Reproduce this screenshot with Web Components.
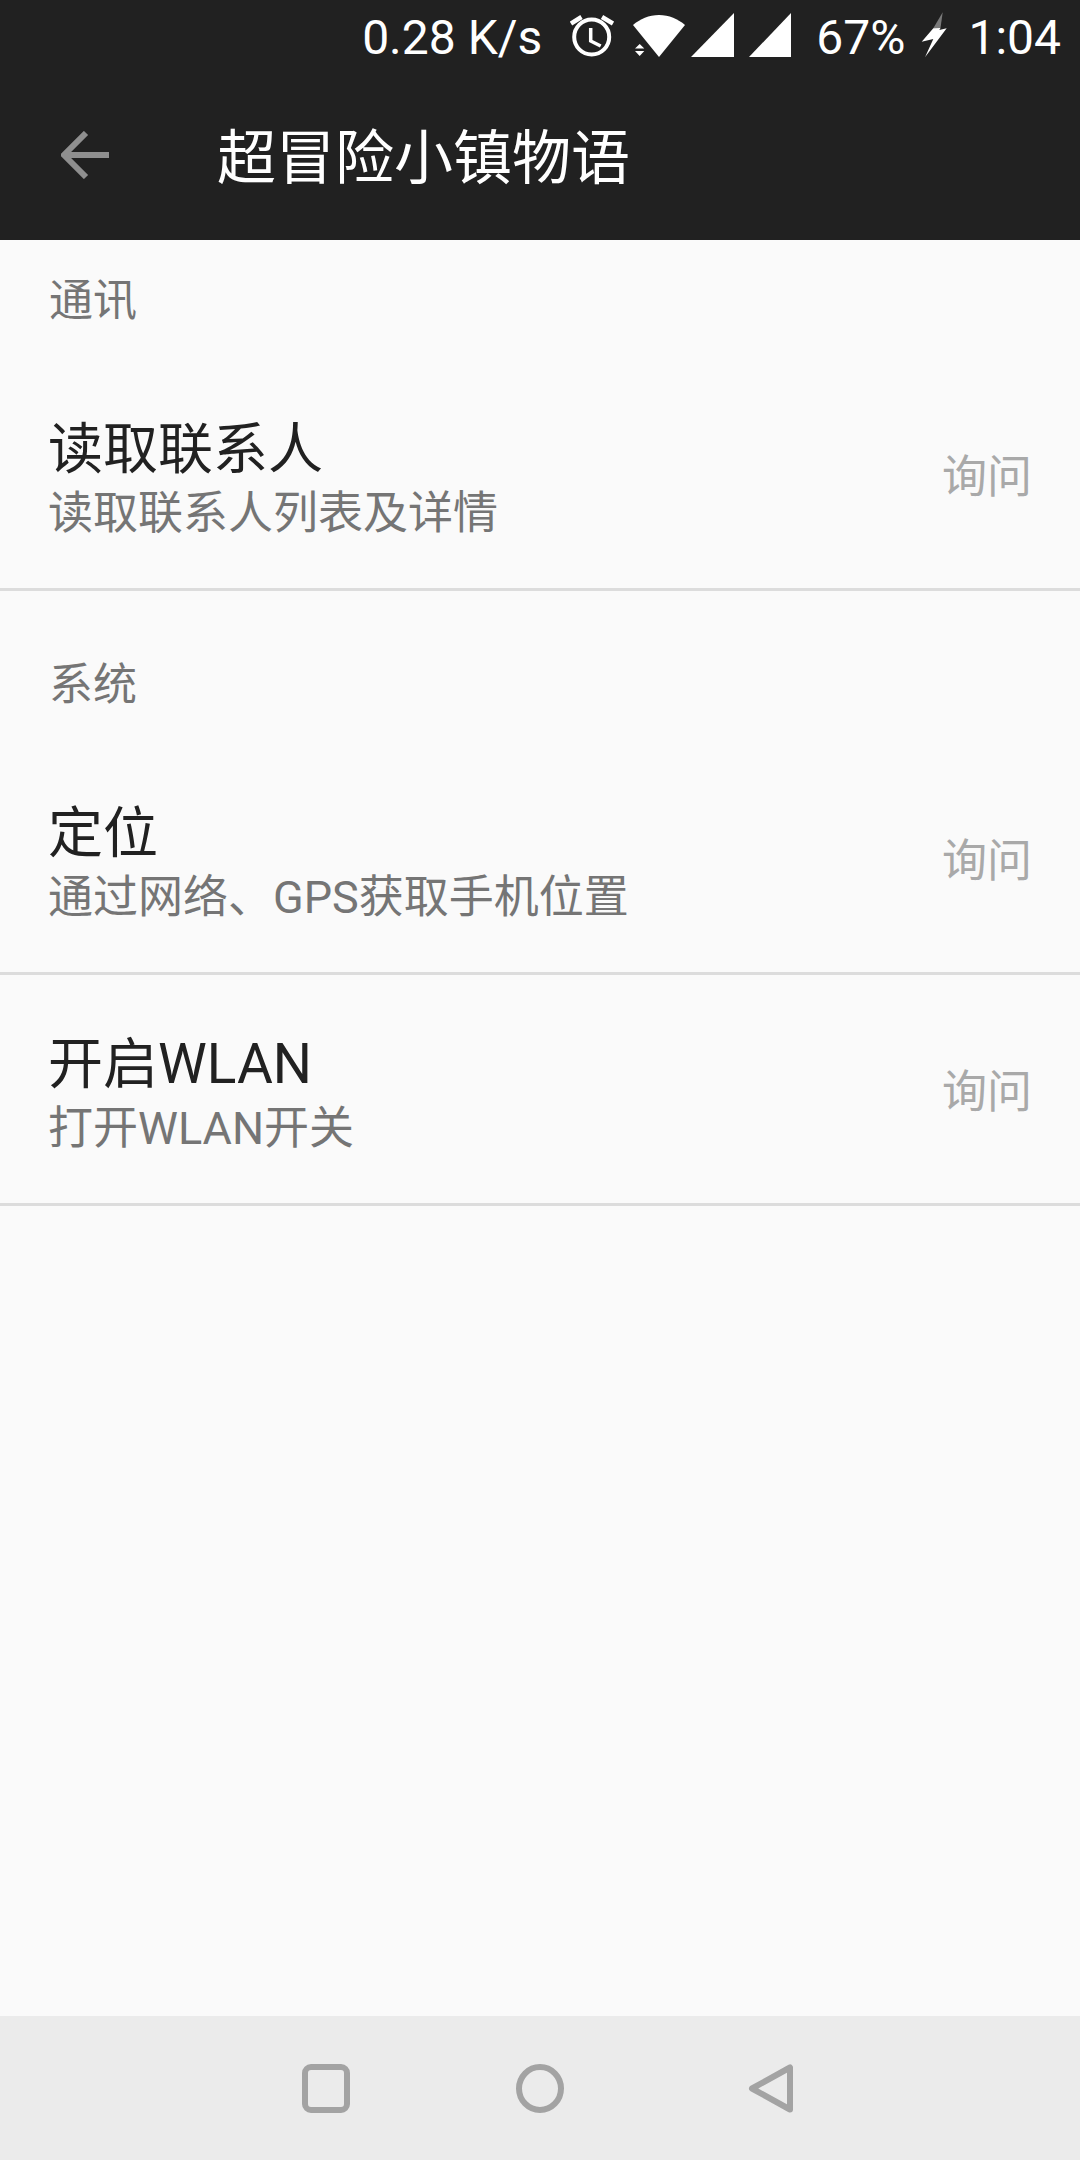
<!DOCTYPE html>
<html lang="zh-CN">
<head>
<meta charset="utf-8">
<title>超冒险小镇物语</title>
<style>
  html, body { margin: 0; height: 100%; background: #fafafa; }
  body { font-family: Roboto, "Noto Sans CJK SC", sans-serif; }
</style>
</head>
<body>
<perm-screen>
  <status-bar slot="top"></status-bar>
  <app-header slot="top">超冒险小镇物语</app-header>

  <section-label first>通讯</section-label>
  <perm-row title="读取联系人" desc="读取联系人列表及详情" value="询问"></perm-row>

  <section-label>系统</section-label>
  <perm-row title="定位" desc="通过网络、GPS获取手机位置" value="询问"></perm-row>
  <perm-row title="开启WLAN" desc="打开WLAN开关" value="询问"></perm-row>

  <nav-bar slot="bottom"></nav-bar>
</perm-screen>

<script>
class PermScreen extends HTMLElement {
  constructor() {
    super();
    this.attachShadow({ mode: "open" });
    this.shadowRoot.innerHTML = `
      <style>
        :host {
          display: flex;
          flex-direction: column;
          width: 1080px;
          height: 2160px;
          background: #fafafa;
        }
        main {
          flex: 1;
          display: flex;
          flex-direction: column;
        }
      </style>
      <slot name="top"></slot>
      <main><slot></slot></main>
      <slot name="bottom"></slot>
    `;
  }
}

class StatusBar extends HTMLElement {
  constructor() {
    super();
    this.attachShadow({ mode: "open" });
    this.shadowRoot.innerHTML = `
      <style>
        :host {
          display: flex;
          justify-content: flex-end;
          align-items: center;
          height: 70px;
          padding-right: 19px;
          background: #212121;
          color: #fff;
          font: 400 48px/70px Roboto, sans-serif;
        }
        span { white-space: nowrap; padding-top: 6px; }
        svg { display: block; flex: none; }
        .alarm { margin: 0 18px 0 28px; }
        .s1 { margin: 0 15px 0 5px; }
        .s2 { margin-right: 25px; }
        .bolt { margin: 0 20px 0 15px; }
      </style>
      <span>0.28 K/s</span>
      <svg class="alarm" width="44" height="44" viewBox="0 0 44 44" fill="none" stroke="#fff">
        <circle cx="21.700" cy="24" r="17.500" stroke-width="4"/>
        <path d="M20.700 15v13l10 5" stroke-width="3.500"/>
        <path d="M1 10.500 11.500 4M43 10.500 32 4" stroke-width="4.500"/>
      </svg>
      <svg width="54" height="44" viewBox="0 0 54 44" fill="#fff">
        <path d="M1 12C8 6 17 2 27 2s19 4 26 10L27 44Z"/>
        <path d="M7.700 31 12.300 35.500H3ZM3 38h9.300L7.700 43Z"/>
      </svg>
      <svg class="s1" width="43" height="44" viewBox="0 0 43 44"><path d="M43 0v44H0Z" fill="#fff"/></svg>
      <svg class="s2" width="42" height="44" viewBox="0 0 42 44"><path d="M42 0v44H0Z" fill="#fff"/></svg>
      <span>67%</span>
      <svg class="bolt" width="28" height="46" viewBox="0 0 28 46">
        <path d="M22.700 .3 13.300 16.300 20.500 16Z" fill="#7a7a7a"/>
        <path d="M13.300 16.300 1.700 29.700 13.300 27 5 45.300 26.700 16.300 19.300 18 20.500 16Z" fill="#fff"/>
      </svg>
      <span>1:04</span>
    `;
  }
}

class AppHeader extends HTMLElement {
  constructor() {
    super();
    this.attachShadow({ mode: "open" });
    this.shadowRoot.innerHTML = `
      <style>
        :host {
          display: flex;
          align-items: center;
          gap: 108px;
          height: 170px;
          padding-left: 61px;
          background: #212121;
          color: #fff;
          font: 400 59px/1 Roboto, "Noto Sans CJK SC", sans-serif;
        }
        svg { display: block; flex: none; }
        span { padding-top: 6px; }
      </style>
      <svg width="48" height="48" viewBox="0 0 48 48" fill="none" stroke="#8f8f8f" stroke-width="6">
        <path d="M48 24H3M25 2 3 24l22 22"/>
      </svg>
      <span><slot></slot></span>
    `;
  }
}

class SectionLabel extends HTMLElement {
  constructor() {
    super();
    this.attachShadow({ mode: "open" });
    this.shadowRoot.innerHTML = `
      <style>
        :host {
          display: block;
          padding: 65px 49px 30px;
          color: #757575;
          font: 400 44px/58px Roboto, "Noto Sans CJK SC", sans-serif;
        }
        :host([first]) { padding-top: 32px; }
      </style>
      <slot></slot>
    `;
  }
}

class PermRow extends HTMLElement {
  constructor() {
    super();
    this.attachShadow({ mode: "open" });
    this.shadowRoot.innerHTML = `
      <style>
        :host {
          display: flex;
          align-items: center;
          justify-content: space-between;
          box-sizing: border-box;
          height: 231px;
          padding: 8px 48px 0;
          border-bottom: 3px solid #dcdcdc;
          font-family: Roboto, "Noto Sans CJK SC", sans-serif;
        }
        .text { padding-top: 4px; }
        .title { color: #212121; font-size: 55px; line-height: 67px; }
        .desc { color: #757575; font-size: 45px; line-height: 62px; }
        .value { color: #a9a9a9; font-size: 45px; line-height: 62px; }
      </style>
      <div class="text">
        <div class="title"></div>
        <div class="desc"></div>
      </div>
      <div class="value"></div>
    `;
  }

  connectedCallback() {
    this.shadowRoot.querySelector(".title").textContent = this.getAttribute("title");
    this.shadowRoot.querySelector(".desc").textContent = this.getAttribute("desc");
    this.shadowRoot.querySelector(".value").textContent = this.getAttribute("value");
  }
}

class NavBar extends HTMLElement {
  constructor() {
    super();
    this.attachShadow({ mode: "open" });
    this.shadowRoot.innerHTML = `
      <style>
        :host {
          display: flex;
          align-items: center;
          gap: 166px;
          height: 144px;
          padding-left: 302px;
          background: #ebebeb;
        }
        svg { display: block; flex: none; }
        .back { margin-left: 18px; }
      </style>
      <svg width="48" height="49" viewBox="0 0 48 49" fill="none" stroke="#a3a3a3" stroke-width="6">
        <rect x="3" y="3" width="42" height="43" rx="6"/>
      </svg>
      <svg width="48" height="49" viewBox="0 0 48 49" fill="none" stroke="#a3a3a3" stroke-width="6">
        <ellipse cx="24" cy="24.500" rx="21" ry="21.500"/>
      </svg>
      <svg class="back" width="48" height="49" viewBox="0 0 48 49" fill="none" stroke="#a3a3a3" stroke-width="6" stroke-linejoin="round">
        <path d="M42 3.500v42L4 24.500Z"/>
      </svg>
    `;
  }
}

customElements.define("perm-screen", PermScreen);
customElements.define("status-bar", StatusBar);
customElements.define("app-header", AppHeader);
customElements.define("section-label", SectionLabel);
customElements.define("perm-row", PermRow);
customElements.define("nav-bar", NavBar);
</script>
</body>
</html>
